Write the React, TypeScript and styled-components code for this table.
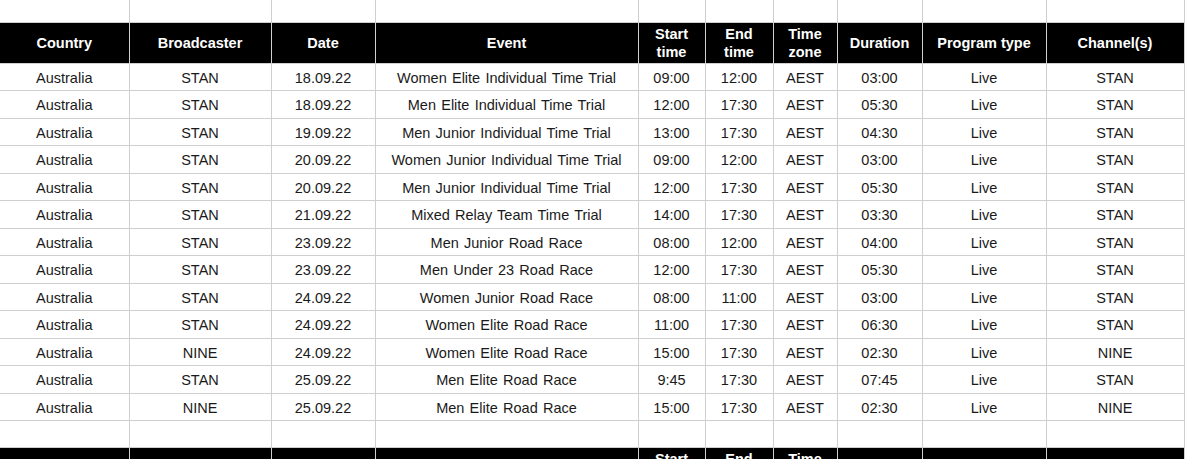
import styled, { createGlobalStyle } from 'styled-components';

const GlobalStyle = createGlobalStyle`
  html, body {
    margin: 0;
    padding: 0;
    background: #ffffff;
  }
  body {
    font-family: "Liberation Sans", Arial, sans-serif;
    overflow: hidden;
  }
`;

const Page = styled.div`
  width: 1200px;
  height: 459px;
  overflow: hidden;
  background: #fff;
`;

const Table = styled.table`
  width: 1184px;
  table-layout: fixed;
  border-collapse: collapse;
  font-size: 14.5px;
  color: #1a1a1a;
`;

const Cell = styled.td<{ $top?: boolean }>`
  border: 1px solid #cfcfcf;
  border-top: ${(p) => (p.$top ? 'none' : '1px solid #cfcfcf')};
  text-align: center;
  vertical-align: middle;
  padding: 2px 2px 0;
  white-space: nowrap;
  word-spacing: 1.2px;

  &:first-child {
    border-left: none;
  }
`;

const HeadCell = styled.th`
  background: #000;
  color: #fff;
  font-weight: 700;
  border: 1px solid #cfcfcf;
  text-align: center;
  vertical-align: middle;
  padding: 0 2px;
  line-height: 18px;

  &:first-child {
    border-left: none;
  }
`;

const Row = styled.tr<{ $h: number }>`
  height: ${(p) => p.$h}px;
`;

const widths = [129, 142, 104, 263, 67, 68, 64, 85, 124, 138];

const headings: React.ReactNode[] = [
  'Country',
  'Broadcaster',
  'Date',
  'Event',
  <>Start<br />time</>,
  <>End<br />time</>,
  <>Time<br />zone</>,
  'Duration',
  'Program type',
  'Channel(s)',
];

type Show = [string, string, string, string, string, string, string];

// broadcaster, date, event, start, end, duration, channel
const shows: Show[] = [
  ['STAN', '18.09.22', 'Women Elite Individual Time Trial', '09:00', '12:00', '03:00', 'STAN'],
  ['STAN', '18.09.22', 'Men Elite Individual Time Trial', '12:00', '17:30', '05:30', 'STAN'],
  ['STAN', '19.09.22', 'Men Junior Individual Time Trial', '13:00', '17:30', '04:30', 'STAN'],
  ['STAN', '20.09.22', 'Women Junior Individual Time Trial', '09:00', '12:00', '03:00', 'STAN'],
  ['STAN', '20.09.22', 'Men Junior Individual Time Trial', '12:00', '17:30', '05:30', 'STAN'],
  ['STAN', '21.09.22', 'Mixed Relay Team Time Trial', '14:00', '17:30', '03:30', 'STAN'],
  ['STAN', '23.09.22', 'Men Junior Road Race', '08:00', '12:00', '04:00', 'STAN'],
  ['STAN', '23.09.22', 'Men Under 23 Road Race', '12:00', '17:30', '05:30', 'STAN'],
  ['STAN', '24.09.22', 'Women Junior Road Race', '08:00', '11:00', '03:00', 'STAN'],
  ['STAN', '24.09.22', 'Women Elite Road Race', '11:00', '17:30', '06:30', 'STAN'],
  ['NINE', '24.09.22', 'Women Elite Road Race', '15:00', '17:30', '02:30', 'NINE'],
  ['STAN', '25.09.22', 'Men Elite Road Race', '9:45', '17:30', '07:45', 'STAN'],
  ['NINE', '25.09.22', 'Men Elite Road Race', '15:00', '17:30', '02:30', 'NINE'],
];

const EmptyRow = ({ h, top }: { h: number; top?: boolean }) => (
  <Row $h={h}>
    {widths.map((_, i) => (
      <Cell key={i} $top={top} />
    ))}
  </Row>
);

const HeaderRow = () => (
  <Row $h={41}>
    {headings.map((h, i) => (
      <HeadCell key={i}>{h}</HeadCell>
    ))}
  </Row>
);

export default function App() {
  return (
    <Page>
      <GlobalStyle />
      <Table>
        <colgroup>
          {widths.map((w, i) => (
            <col key={i} style={{ width: w }} />
          ))}
        </colgroup>
        <tbody>
          <EmptyRow h={22} top />
          <HeaderRow />
          {shows.map(([bc, date, event, start, end, dur, ch], i) => (
            <Row $h={27.5} key={i}>
              <Cell>Australia</Cell>
              <Cell>{bc}</Cell>
              <Cell>{date}</Cell>
              <Cell>{event}</Cell>
              <Cell>{start}</Cell>
              <Cell>{end}</Cell>
              <Cell>AEST</Cell>
              <Cell>{dur}</Cell>
              <Cell>Live</Cell>
              <Cell>{ch}</Cell>
            </Row>
          ))}
          <EmptyRow h={27} />
          <HeaderRow />
        </tbody>
      </Table>
    </Page>
  );
}
